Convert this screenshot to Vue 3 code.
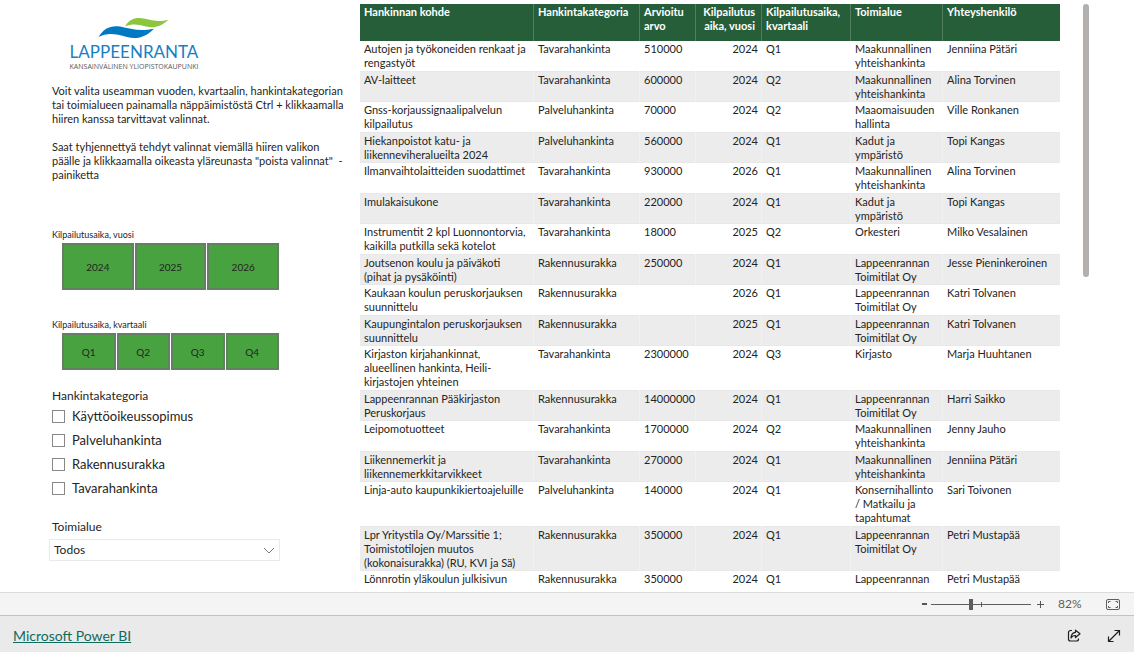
<script setup>
import { ref } from 'vue'

const years = ['2024', '2025', '2026']
const quarters = ['Q1', 'Q2', 'Q3', 'Q4']
const categories = ['Käyttöoikeussopimus', 'Palveluhankinta', 'Rakennusurakka', 'Tavarahankinta']
const zoom = ref(40)

const T = 'Tavarahankinta'
const P = 'Palveluhankinta'
const R = 'Rakennusurakka'
const maakunta = 'Maakunnallinen\nyhteishankinta'
const toimitilat = 'Lappeenrannan\nToimitilat Oy'
const kadut = 'Kadut ja\nympäristö'

const rows = [
  ['Autojen ja työkoneiden renkaat ja\nrengastyöt', T, '510000', '2024', 'Q1', maakunta, 'Jenniina Pätäri'],
  ['AV-laitteet', T, '600000', '2024', 'Q2', maakunta, 'Alina Torvinen'],
  ['Gnss-korjaussignaalipalvelun\nkilpailutus', P, '70000', '2024', 'Q2', 'Maaomaisuuden\nhallinta', 'Ville Ronkanen'],
  ['Hiekanpoistot katu- ja\nliikenneviheralueilta 2024', P, '560000', '2024', 'Q1', kadut, 'Topi Kangas'],
  ['Ilmanvaihtolaitteiden suodattimet', T, '930000', '2026', 'Q1', maakunta, 'Alina Torvinen'],
  ['Imulakaisukone', T, '220000', '2024', 'Q1', kadut, 'Topi Kangas'],
  ['Instrumentit 2 kpl Luonnontorvia,\nkaikilla putkilla sekä kotelot', T, '18000', '2025', 'Q2', 'Orkesteri', 'Milko Vesalainen'],
  ['Joutsenon koulu ja päiväkoti\n(pihat ja pysäköinti)', R, '250000', '2024', 'Q1', toimitilat, 'Jesse Pieninkeroinen'],
  ['Kaukaan koulun peruskorjauksen\nsuunnittelu', R, '', '2026', 'Q1', toimitilat, 'Katri Tolvanen'],
  ['Kaupungintalon peruskorjauksen\nsuunnittelu', R, '', '2025', 'Q1', toimitilat, 'Katri Tolvanen'],
  ['Kirjaston kirjahankinnat,\nalueellinen hankinta, Heili-\nkirjastojen yhteinen', T, '2300000', '2024', 'Q3', 'Kirjasto', 'Marja Huuhtanen'],
  ['Lappeenrannan Pääkirjaston\nPeruskorjaus', R, '14000000', '2024', 'Q1', toimitilat, 'Harri Saikko'],
  ['Leipomotuotteet', T, '1700000', '2024', 'Q2', maakunta, 'Jenny Jauho'],
  ['Liikennemerkit ja\nliikennemerkkitarvikkeet', T, '270000', '2024', 'Q1', maakunta, 'Jenniina Pätäri'],
  ['Linja-auto kaupunkikiertoajeluille', P, '140000', '2024', 'Q1', 'Konsernihallinto\n/ Matkailu ja\ntapahtumat', 'Sari Toivonen'],
  ['Lpr Yritystila Oy/Marssitie 1;\nToimistotilojen muutos\n(kokonaisurakka) (RU, KVI ja Sä)', R, '350000', '2024', 'Q1', toimitilat, 'Petri Mustapää'],
  ['Lönnrotin yläkoulun julkisivun', R, '350000', '2024', 'Q1', 'Lappeenrannan', 'Petri Mustapää'],
]
</script>

<template>
  <div class="shell">
    <main class="report">
      <aside class="filters">
        <div class="logo">
          <svg viewBox="0 0 74 24" width="74" height="24" aria-hidden="true">
            <path d="M29 9.500 C34 1 41 0 49 1.800 C57 3.800 64 5 72.500 2.700 C65 9.500 58 11.500 50 9.500 C42 7.300 36 6.500 29 9.500 Z" fill="#8cc63f" />
            <path d="M2.500 20 C8 11 15 8 24 9.500 C35 12 44 14.500 58 11.700 C51 19 42 23 31 20 C19 16.500 11 15.500 2.500 20 Z" fill="#0079c2" />
          </svg>
          <div class="city">LAPPEENRANTA</div>
          <div class="tagline">KANSAINVÄLINEN YLIOPISTOKAUPUNKI</div>
        </div>

        <div class="help">
          <p>Voit valita useamman vuoden, kvartaalin, hankintakategorian<br>tai toimialueen painamalla näppäimistöstä Ctrl + klikkaamalla<br>hiiren kanssa tarvittavat valinnat.</p>
          <p>Saat tyhjennettyä tehdyt valinnat viemällä hiiren valikon<br>päälle ja klikkaamalla oikeasta yläreunasta "poista valinnat"&nbsp; -<br>painiketta</p>
        </div>

        <section class="slicer years">
          <h2>Kilpailutusaika, vuosi</h2>
          <div class="tiles">
            <button v-for="y in years" :key="y" type="button">{{ y }}</button>
          </div>
        </section>

        <section class="slicer quarters">
          <h2>Kilpailutusaika, kvartaali</h2>
          <div class="tiles">
            <button v-for="q in quarters" :key="q" type="button">{{ q }}</button>
          </div>
        </section>

        <fieldset class="checks">
          <legend>Hankintakategoria</legend>
          <label v-for="c in categories" :key="c"><input type="checkbox">{{ c }}</label>
        </fieldset>

        <div class="area">
          <label for="area">Toimialue</label>
          <div class="select">
            <select id="area"><option>Todos</option></select>
            <svg viewBox="0 0 12 7" width="12" height="7" aria-hidden="true"><path d="M1 1 L6 6 L11 1" fill="none" stroke="#777" /></svg>
          </div>
        </div>
      </aside>

      <div class="table-view">
        <table>
          <colgroup>
            <col class="c-name"><col class="c-cat"><col class="c-value"><col class="c-year"><col class="c-quarter"><col class="c-area"><col class="c-person">
          </colgroup>
          <thead>
            <tr>
              <th>Hankinnan kohde</th>
              <th>Hankintakategoria</th>
              <th>Arvioitu<br>arvo</th>
              <th class="num">Kilpailutus<br>aika, vuosi</th>
              <th>Kilpailutusaika,<br>kvartaali</th>
              <th>Toimialue</th>
              <th>Yhteyshenkilö</th>
            </tr>
          </thead>
          <tbody>
            <tr v-for="(row, i) in rows" :key="i">
              <td v-for="(cell, j) in row" :key="j" :class="{ num: j === 3 }">{{ cell }}</td>
            </tr>
          </tbody>
        </table>
        <div class="scroll"><div class="thumb"></div></div>
      </div>
    </main>

    <div class="zoombar">
      <button type="button" class="step" aria-label="Loitonna"><svg width="5" height="2" viewBox="0 0 5 2"><path d="M0 1H5" stroke="#555" stroke-width="2" /></svg></button>
      <div class="slider">
        <input v-model="zoom" type="range" min="0" max="100" aria-label="Zoomaus">
      </div>
      <button type="button" class="step" aria-label="Lähennä"><svg width="7" height="7" viewBox="0 0 7 7"><path d="M0 3.5H7M3.5 0V7" stroke="#555" /></svg></button>
      <span class="percent">82%</span>
      <button type="button" class="fit" aria-label="Sovita sivulle">
        <svg width="14" height="11" viewBox="0 0 14 11" fill="none" stroke="#605e5c">
          <rect x="0.5" y="0.5" width="13" height="10" rx="1.5" />
          <path d="M2.5 4V2.5H4.5M9.5 2.500H11.5V4M11.5 7V8.5H9.5M4.5 8.5H2.5V7" />
        </svg>
      </button>
    </div>

    <footer>
      <a href="#">Microsoft Power BI</a>
      <div class="actions">
        <button type="button" aria-label="Jaa">
          <svg width="14" height="14" viewBox="0 0 14 14" fill="none" stroke="#201f1e" stroke-width="1.200" stroke-linejoin="round">
            <path d="M5 1.500H3.500A2 2 0 0 0 1.500 3.500V10A2 2 0 0 0 3.500 12H9.500A2 2 0 0 0 11.500 10V9.500" />
            <path d="M8.500 1.200L13 4.800L8.500 8.500V6.500C6.500 6.500 5 7 4 9C4.200 5.500 5.800 3.500 8.500 3.300Z" />
          </svg>
        </button>
        <button type="button" aria-label="Koko näyttö">
          <svg width="14" height="14" viewBox="0 0 14 14" fill="none" stroke="#201f1e" stroke-width="1.200">
            <path d="M1.500 12.500L12.500 1.500M7.500 1.500H12.500V6.500M1.500 7.500V12.500H6.500" />
          </svg>
        </button>
      </div>
    </footer>
  </div>
</template>

<style>
body { margin: 0; background: #fff; }
</style>

<style scoped>
.shell {
  display: flex;
  flex-direction: column;
  height: 100vh;
  font-family: Lato, "Open Sans", sans-serif;
  font-size: 11px;
  line-height: 14px;
  color: #252423;
}
.shell * { box-sizing: border-box; }
button, select, input { font: inherit; color: inherit; margin: 0; }
button { padding: 0; border: 0; background: none; }

.report {
  flex: 1;
  min-height: 0;
  display: grid;
  grid-template-columns: 360px minmax(0, 1fr);
  overflow: hidden;
}
.filters { padding: 17px 0 0 52px; }

.logo { width: 164px; display: flex; flex-direction: column; align-items: center; height: 67px; }
.logo svg { margin-right: 2px; }
.city { font-size: 17px; line-height: 22px; color: #1680c4; white-space: nowrap; }
.tagline { font-family: "Open Sans", sans-serif; font-size: 7px; line-height: 8px; color: #58595b; white-space: nowrap; }

.help { height: 144px; white-space: nowrap; }
.help p { margin: 0 0 14px; }

.slicer h2 { margin: 0; font-size: 9px; line-height: 14px; font-weight: 400; }
.slicer { width: 227px; }
.years { height: 90px; }
.quarters { height: 71px; }
.tiles { display: flex; gap: 1px; padding-left: 10px; margin-top: 1px; }
.tiles button { flex: 1; border: 2px solid #657f65; background: #48a23f; font-size: 10px; }
.years button { height: 47px; }
.quarters button { height: 37px; }

.checks { border: 0; margin: 0; padding: 0; height: 131px; }
.checks legend { padding: 0 0 1px; font-size: 12px; line-height: 14px; }
.checks label { display: flex; align-items: center; gap: 7px; height: 24px; font-size: 13px; }
.checks input { appearance: none; width: 13px; height: 13px; border: 1px solid #8a8886; background: #fff; }

.area > label { display: block; height: 19px; font-size: 12px; }
.select { position: relative; width: 231px; margin-left: -3px; }
.select select { appearance: none; width: 100%; height: 22px; padding: 0 4px; border: 1px solid #eaeaea; border-radius: 0; background: #fff; display: block; font-size: 12px; }
.select svg { position: absolute; right: 5px; top: 8px; pointer-events: none; }

.table-view { display: flex; gap: 23px; padding-right: 45px; margin: 4px 0 6px; overflow: hidden; }
table { flex: 1; width: 100%; table-layout: fixed; border-collapse: separate; border-spacing: 0; align-self: flex-start; }
.c-name { width: 174px; }
.c-cat { width: 106px; }
.c-value { width: 56px; }
.c-year { width: 66px; }
.c-quarter { width: 89px; }
.c-area { width: 92px; }
th { height: 37px; padding: 1px 3px 0 4px; vertical-align: top; text-align: left; font-weight: 700; color: #fff; background: #275e3a; border-right: 1px solid #527d60; white-space: nowrap; }
td { padding: 1px 3px 1px 4px; vertical-align: top; white-space: pre; border-right: 1px solid #f1f1f1; border-bottom: 1px solid #e8e8e8; }
th:last-child, td:last-child { border-right: 0; }
th.num { text-align: right; padding-right: 6px; }
td.num { text-align: right; }
tbody tr:nth-child(odd) td { border-right-color: #fff; }
tbody tr:nth-child(even) td { padding-bottom: 0; background: #ececec; }
.scroll { width: 6px; }
.thumb { height: 273px; border-radius: 3px; background: #b3b0ad; }

.zoombar { flex: none; height: 24px; display: flex; align-items: center; justify-content: flex-end; padding-right: 14px; background: #f4f4f4; border-top: 1px solid #dcdcdc; border-bottom: 1px solid #c3c3c3; color: #605e5c; }
.step { display: flex; }
.slider { width: 100px; margin: 0 6px 0 4px; display: flex; background: linear-gradient(#605e5c, #605e5c) 50px 50% / 1px 5px no-repeat; }
.slider input { appearance: none; width: 100%; height: 11px; background: linear-gradient(#605e5c, #605e5c) 0 50% / 100% 1px no-repeat; }
.slider input::-webkit-slider-thumb { appearance: none; width: 4px; height: 11px; background: #605e5c; }
.percent { margin-left: 14px; width: 48px; font-size: 12px; }
.fit { display: flex; }

footer { flex: none; height: 36px; display: flex; align-items: center; justify-content: space-between; padding: 4px 13px 0; background: #eaeaea; }
footer a { font-size: 14px; line-height: 18px; color: #0f6b5c; }
.actions { display: flex; gap: 26px; }
.actions button { display: flex; }
</style>
